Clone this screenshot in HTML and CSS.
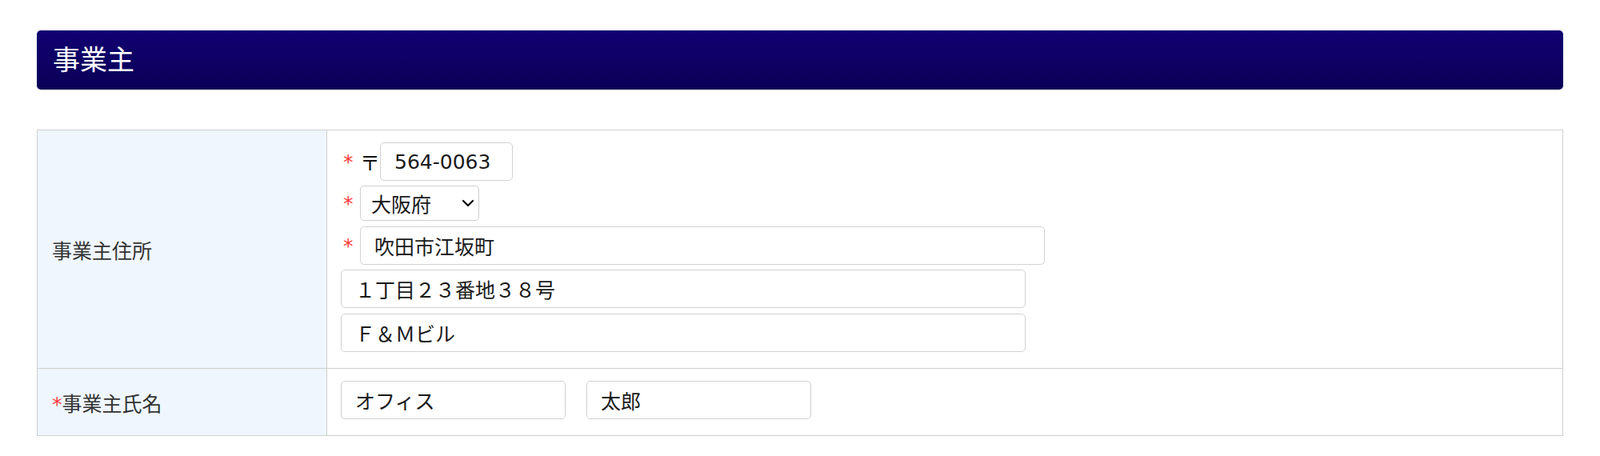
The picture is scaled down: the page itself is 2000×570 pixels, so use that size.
FILE: index.html
```html
<!DOCTYPE html>
<html lang="ja">
<head>
<meta charset="utf-8">
<title>事業主</title>
<link rel="stylesheet" href="styles.css">
</head>
<body>
<div class="page">
  <h2 class="section-title">事業主</h2>
  <table class="form-table">
    <colgroup><col class="col-label"><col></colgroup>
    <tr>
      <th>事業主住所</th>
      <td>
        <div class="line"><span class="req">*</span><span class="zip-mark">〒</span><input class="field zip" type="text" value="564-0063"></div>
        <div class="line"><span class="req">*</span><span class="select-wrap"><select class="pref"><option>大阪府</option></select><svg class="chevron" width="16" height="10" viewBox="0 0 16 10"><path d="M2 2 L8 8 L14 2" fill="none" stroke="#111" stroke-width="2.2" stroke-linecap="round" stroke-linejoin="round"/></svg></span></div>
        <div class="line"><span class="req">*</span><input class="field addr" type="text" value="吹田市江坂町"></div>
        <div class="line"><input class="field addr" type="text" value="１丁目２３番地３８号"></div>
        <div class="line"><input class="field addr" type="text" value="Ｆ＆Ｍビル"></div>
      </td>
    </tr>
    <tr>
      <th><span class="req-inline">*</span>事業主氏名</th>
      <td>
        <div class="line"><input class="field name" type="text" value="オフィス"><input class="field name name-given" type="text" value="太郎"></div>
      </td>
    </tr>
  </table>
</div>
</body>
</html>
```
FILE: styles.css
```css
html, body {
  margin: 0;
  padding: 0;
  background: #ffffff;
}
body {
  font-family: "DejaVu Sans", "Noto Sans CJK JP", sans-serif;
  font-size: 25px;
  color: #333333;
}
.page {
  padding: 38px 46px 0 46px;
}
.section-title {
  margin: 0;
  height: 74px;
  box-sizing: border-box;
  display: flex;
  align-items: center;
  padding: 0 0 4px 20px;
  border-radius: 5px;
  background: linear-gradient(to bottom, #110072 0%, #0a0056 100%);
  color: #ffffff;
  font-family: "Noto Sans CJK JP", sans-serif;
  font-weight: normal;
  font-size: 34px;
  line-height: 1;
}
.form-table {
  margin-top: 50px;
  width: 100%;
  border-collapse: collapse;
  table-layout: fixed;
}
.col-label {
  width: 362px;
}
.form-table th,
.form-table td {
  border: 1px solid #cfcfcf;
}
.form-table th {
  background: #eff6fe;
  text-align: left;
  font-weight: normal;
  vertical-align: middle;
  padding: 0 18px;
  color: #333333;
  font-family: "Noto Sans CJK JP", sans-serif;
}
.form-table td {
  padding: 15px 17px 20px 17px;
  vertical-align: top;
  background: #ffffff;
}
.line {
  display: flex;
  align-items: center;
  height: 48px;
}
.line:nth-child(2) {
  margin-top: 4px;
}
.line:nth-child(3) {
  margin-top: 5px;
}
.line:nth-child(4) {
  margin-top: 6px;
}
.line:nth-child(5) {
  margin-top: 7px;
}
.req {
  color: #ff3b3b;
  width: 24px;
  flex: none;
  padding-left: 3px;
  box-sizing: border-box;
}
.req-inline {
  color: #ff3b3b;
  font-family: "DejaVu Sans", sans-serif;
}
.zip-mark {
  width: 25px;
  flex: none;
  color: #111111;
  font-family: "Noto Sans CJK JP", sans-serif;
}
.field {
  box-sizing: border-box;
  height: 48px;
  border: 1px solid #d2d2d2;
  border-radius: 5px;
  padding: 0 17px;
  font-family: "DejaVu Sans", "Noto Sans CJK JP", sans-serif;
  font-size: 25px;
  color: #1a1a1a;
  background: #ffffff;
  outline: none;
  margin: 0;
}
.zip {
  width: 166px;
}
.addr {
  width: 856px;
}
.name {
  width: 281px;
}
.name-given {
  margin-left: 26px;
}
.select-wrap {
  position: relative;
  display: inline-block;
  width: 149px;
  height: 44px;
}
.pref {
  -webkit-appearance: none;
  appearance: none;
  box-sizing: border-box;
  width: 149px;
  height: 44px;
  border: 1px solid #cfcfcf;
  border-radius: 5px;
  padding: 0 0 0 13px;
  background: #ffffff;
  font-family: "Noto Sans CJK JP", sans-serif;
  font-size: 25px;
  color: #1a1a1a;
  margin: 0;
}
.chevron {
  position: absolute;
  right: 6px;
  top: 17px;
  pointer-events: none;
}
```
